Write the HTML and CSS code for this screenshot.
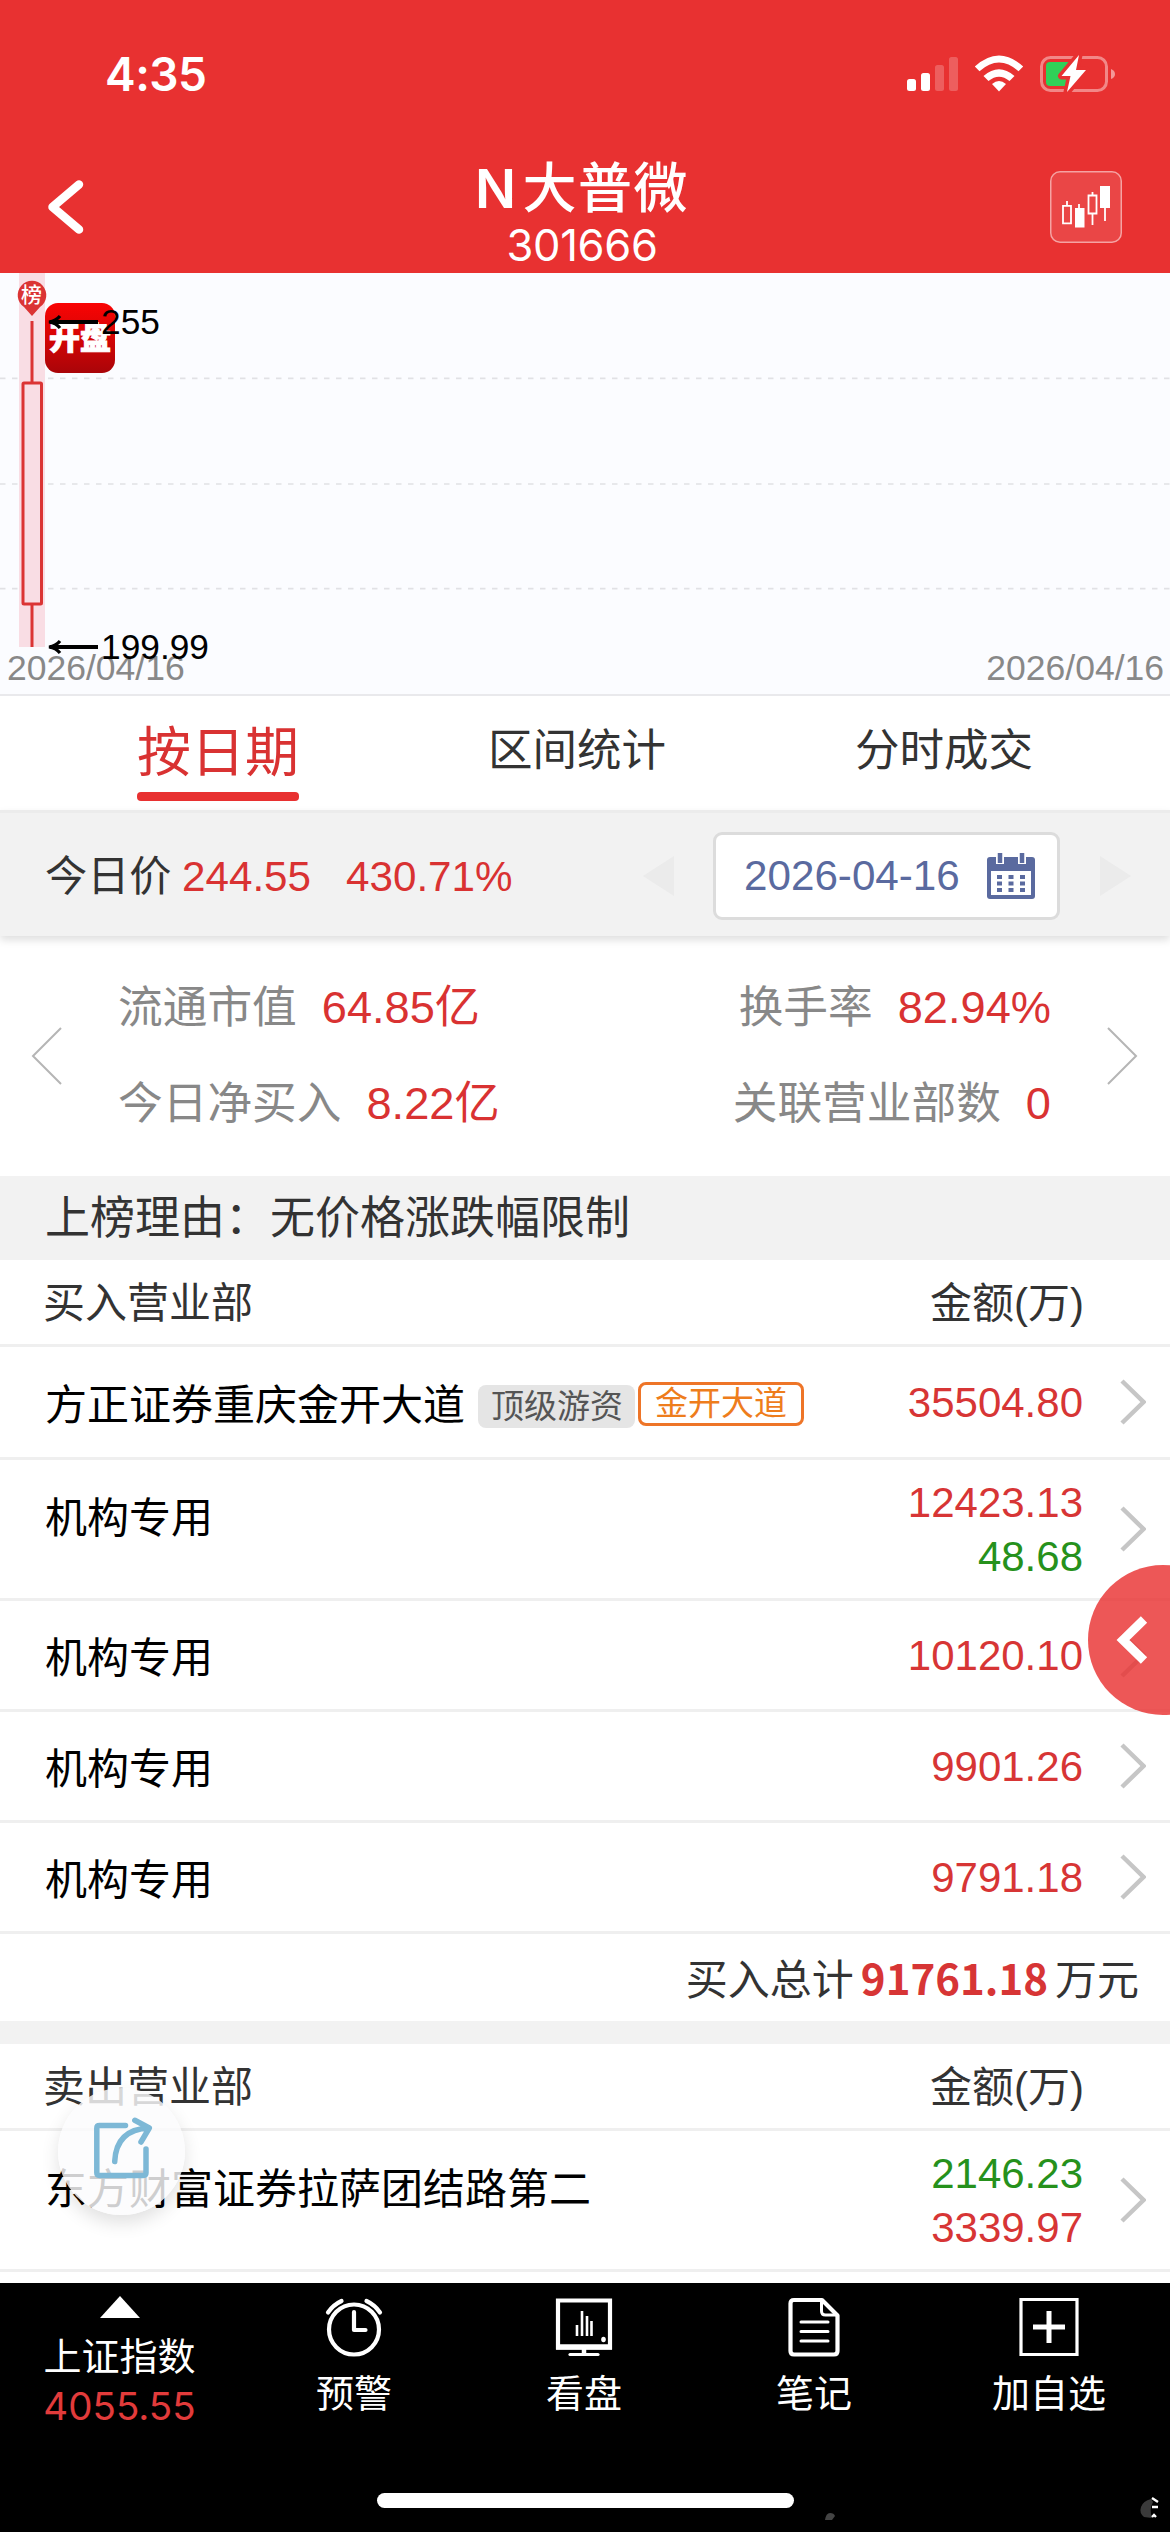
FILE: index.html
```html
<!DOCTYPE html>
<html lang="zh-CN">
<head>
<meta charset="utf-8">
<title>N大普微 301666</title>
<link rel="stylesheet" href="styles.css">
</head>
<body>
<div class="app">
  <header class="header">
    <div class="status">
      <span class="clock">4:35</span>
      <svg class="status-icons" width="210" height="40" viewBox="906 54 210 40">
        <g fill="#fff">
          <rect x="907" y="79" width="9" height="12" rx="2.5"/>
          <rect x="921" y="73" width="9" height="18" rx="2.5"/>
          <g opacity=".22"><rect x="935" y="65" width="9" height="26" rx="2.5"/><rect x="949" y="57" width="9" height="34" rx="2.5"/></g>
          <path d="M999 91.500l-7-7.500q7-6 14 0z"/>
          <path d="M983.500 76q15.500-13.500 31 0l-5 5q-10.500-8.500-21 0z"/>
          <path d="M974.800 66.500q24.200-22 48.400 0l-4.700 4.800q-19.500-17.500-39 0z"/>
          <path d="M1111 69q4 1.500 4 5t-4 5z" opacity=".5"/>
        </g>
        <rect x="1041.500" y="57.500" width="65" height="33" rx="9" fill="none" stroke="#fff" stroke-opacity=".42" stroke-width="3"/>
        <rect x="1046" y="62" width="25" height="24" rx="4" fill="#30d158"/>
        <path d="M1079 55l-17.500 21h9l-3.500 16 19-22h-10z" fill="#fff" stroke="#e83131" stroke-width="7" stroke-linejoin="round" paint-order="stroke"/>
      </svg>
    </div>
    <div class="navbar">
      <svg class="back" width="44" height="64" viewBox="45 176 44 64"><path d="M80 184.500L53.500 207 80 229.500" fill="none" stroke="#fff" stroke-width="8.500" stroke-linecap="round" stroke-linejoin="round"/></svg>
      <div class="heading">
        <h1 class="stock-name"><b>N</b>大普微</h1>
        <p class="stock-code">301666</p>
      </div>
      <div class="kline-btn">
        <svg width="72" height="72" viewBox="1050 171 72 72" fill="none" stroke="#fff" stroke-width="1.800">
          <path d="M1063 205.800h8v17.500h-8zM1067 205v-4M1088.500 195.500h8v18h-8zM1092.500 195v-3M1092.500 214v11M1079 208v-4M1105 207v14"/>
          <path d="M1075 208h9.500v19.500h-9.500zM1100 186h10v22h-10z" fill="#fff" stroke="none"/>
        </svg>
      </div>
    </div>
  </header>

  <section class="chart">
    <svg width="1170" height="421" viewBox="0 273 1170 421">
      <g stroke="#e1e1e5" stroke-width="1.700" stroke-dasharray="5.500 6.500"><path d="M0 378.300h1170M0 484h1170M0 588.700h1170"/></g>
      <rect x="19" y="273" width="26" height="374" fill="#f9dde4"/>
      <g stroke="#db3434" fill="none"><path d="M32 321v61M32 604v43" stroke-width="3"/><rect x="23" y="383" width="18.500" height="221" rx="1" stroke-width="3"/></g>
      <path d="M32 316l-8-9a14.300 14.300 0 1 1 16 0z" fill="#db3434"/>
    </svg>
    <span class="pin-text">榜</span>
    <span class="open-badge">开盘</span>
    <span class="axis-date axis-left">2026/04/16</span>
    <span class="axis-date axis-right">2026/04/16</span>
    <span class="mark mark-high"><svg width="52" height="18" viewBox="0 0 52 18"><path d="M3 9h48" fill="none" stroke="#000" stroke-width="4"/><path d="M13 3Q9 8 2 9q7 1 11 6" fill="none" stroke="#000" stroke-width="3.200"/></svg>255</span>
    <span class="mark mark-low"><svg width="52" height="18" viewBox="0 0 52 18"><path d="M3 9h48" fill="none" stroke="#000" stroke-width="4"/><path d="M13 3Q9 8 2 9q7 1 11 6" fill="none" stroke="#000" stroke-width="3.200"/></svg>199.99</span>
  </section>

  <nav class="tabs">
    <span class="tab active">按日期</span>
    <span class="tab">区间统计</span>
    <span class="tab">分时成交</span>
  </nav>

  <section class="price-bar">
    <span class="price-label">今日价</span>
    <span class="price">244.55</span>
    <span class="change">430.71%</span>
    <svg class="tri tri-prev" width="31" height="40"><path d="M0 20L31 0v40z" fill="#ebebeb"/></svg>
    <div class="date-box">
      <span>2026-04-16</span>
      <svg width="48" height="46" viewBox="987 853 48 46">
        <path d="M990 857h42q3 0 3 3v36q0 3-3 3h-42q-3 0-3-3v-36q0-3 3-3z" fill="#5a6a9f"/>
        <path d="M991 871h40v24h-40z" fill="#fff"/>
        <path d="M1000 851v13M1022 851v13" stroke="#fff" stroke-width="8"/>
        <path d="M1000 853v10M1022 853v10" stroke="#5a6a9f" stroke-width="4.500"/>
        <path d="M997 877h29M997 883.500h29M997 890h29" stroke="#5a6a9f" stroke-width="3.800" stroke-dasharray="5 6.500"/>
      </svg>
    </div>
    <svg class="tri tri-next" width="31" height="40"><path d="M31 20L0 0v40z" fill="#ebebeb"/></svg>
  </section>

  <section class="stats">
    <svg width="31" height="58"><path d="M30 1L2 29l28 28" fill="none" stroke="#b5b5b5" stroke-width="2"/></svg>
    <div class="stat-grid">
      <p>流通市值<b>64.85亿</b></p>
      <p>换手率<b>82.94%</b></p>
      <p>今日净买入<b>8.22亿</b></p>
      <p>关联营业部数<b>0</b></p>
    </div>
    <svg width="31" height="58"><path d="M1 1l28 28L1 57" fill="none" stroke="#b5b5b5" stroke-width="2"/></svg>
  </section>

  <div class="reason">上榜理由：无价格涨跌幅限制</div>

  <section class="table">
    <div class="thead"><span>买入营业部</span><span>金额(万)</span></div>
    <div class="row"><span class="name">方正证券重庆金开大道</span><span class="tag tag-gray">顶级游资</span><span class="tag tag-orange">金开大道</span>
      <span class="vals"><i class="up">35504.80</i></span><svg class="chev" width="26" height="46"><path d="M2 2l21.500 21L2 44"/></svg></div>
    <div class="row double"><span class="name">机构专用</span>
      <span class="vals"><i class="up">12423.13</i><i class="down">48.68</i></span><svg class="chev" width="26" height="46"><path d="M2 2l21.500 21L2 44"/></svg></div>
    <div class="row"><span class="name">机构专用</span>
      <span class="vals"><i class="up">10120.10</i></span><svg class="chev" width="26" height="46"><path d="M2 2l21.500 21L2 44"/></svg></div>
    <div class="row"><span class="name">机构专用</span>
      <span class="vals"><i class="up">9901.26</i></span><svg class="chev" width="26" height="46"><path d="M2 2l21.500 21L2 44"/></svg></div>
    <div class="row"><span class="name">机构专用</span>
      <span class="vals"><i class="up">9791.18</i></span><svg class="chev" width="26" height="46"><path d="M2 2l21.500 21L2 44"/></svg></div>
    <div class="total">买入总计<b>91761.18</b>万元</div>
  </section>

  <section class="table sell">
    <div class="thead"><span>卖出营业部</span><span>金额(万)</span></div>
    <div class="row double"><span class="name">东方财富证券拉萨团结路第二</span>
      <span class="vals"><i class="down">2146.23</i><i class="up">3339.97</i></span><svg class="chev" width="26" height="46"><path d="M2 2l21.500 21L2 44"/></svg></div>
  </section>

  <footer class="footer">
    <div class="index">
      <svg width="40" height="22"><path d="M20 0l20 22H0z" fill="#fff"/></svg>
      <span>上证指数</span>
      <span class="index-value">4055.55</span>
    </div>
    <div class="tool tool-alarm">
      <svg width="60" height="60" viewBox="325.500 2297 60 60" fill="none" stroke="#fff" stroke-width="4.200" stroke-linecap="round" stroke-linejoin="round"><circle cx="355.500" cy="2329.500" r="25"/><path d="M355.500 2312v18h11.500M329.500 2312.500q5-7.500 13.500-11.500M381.500 2312.500q-5-7.500-13.500-11.500"/></svg>
      <span>预警</span>
    </div>
    <div class="tool tool-watch">
      <svg width="60" height="60" viewBox="555 2297 60 60" fill="none" stroke="#fff"><path d="M559 2300.500h52v47h-52z" stroke-width="4.200"/><path d="M557 2347h56" stroke-width="5.500"/><path d="M585 2349v5" stroke-width="4.500"/><path d="M571 2354.500h28" stroke-width="3.200" stroke-linecap="round"/><path d="M578 2325v11M583 2311v25M588 2316v20M592.500 2321v15" stroke-width="2.600"/><ellipse cx="604.500" cy="2339.500" rx="2.300" ry="2.800" fill="#fff" stroke="none"/></svg>
      <span>看盘</span>
    </div>
    <div class="tool tool-note">
      <svg width="60" height="60" viewBox="784 2297 60 60" fill="none" stroke="#fff" stroke-linejoin="round"><path d="M794 2300h28l15.500 15.500v35.500q0 3.500-3.500 3.500h-40q-3.500 0-3.500-3.500v-47.500q0-3.500 3.500-3.500z" stroke-width="4.200"/><path d="M821.500 2300v11q0 4 4 4h12M801 2322h27M801 2331.500h27M801 2341h27" stroke-width="3" stroke-linecap="round"/></svg>
      <span>笔记</span>
    </div>
    <div class="tool tool-add">
      <svg width="60" height="60" viewBox="1020 2297 60 60" fill="none" stroke="#fff"><path d="M1022 2299.500h56v55h-56z" stroke-width="3.200"/><path d="M1050 2311v32M1034 2327h32" stroke-width="5"/></svg>
      <span>加自选</span>
    </div>
    <div class="home-bar"></div>
    <svg class="corner-mark" width="340" height="30" viewBox="820 2492 340 30">
      <path d="M825 2520q1-7 5-7t5 3l-3 4z" fill="#444"/>
      <path d="M1151 2499q-8 2-10 8t3 10l8 1q-3-9 1-16z" fill="#3a3a3a"/>
      <path d="M1152 2498l6 4M1152 2507h6M1152 2517l2-2 2 2" fill="none" stroke="#fff" stroke-width="2.400"/>
    </svg>
  </footer>

  <div class="side-float"><svg width="34" height="50" viewBox="1115 1615 34 50"><path d="M1144 1619.500L1123 1640l21 20.500" fill="none" stroke="#fff" stroke-width="9"/></svg></div>
  <div class="share-float">
    <svg width="60" height="64" viewBox="93 2116 60 64" fill="none" stroke="#7db8d6" stroke-width="5.500" stroke-linecap="round" stroke-linejoin="round"><path d="M125.500 2125.500H99.500q-2.700 0-2.700 2.700v44.600q0 2.700 2.700 2.700h43.800q2.700 0 2.700-2.700V2149"/><path d="M114.700 2161.500q1.500-32 34-33.500M134.800 2120.300l14.500 7.700-8.300 14"/></svg>
  </div>
</div>
</body>
</html>
```
FILE: styles.css
```css
* { box-sizing: border-box; }
body { margin: 0; background: #fff; font-family: "Liberation Sans", "Noto Sans CJK SC", sans-serif; color: #333; }
svg { display: block; flex: none; }
p, h1 { margin: 0; }
i { font-style: normal; }

.app { position: relative; width: 1170px; height: 2532px; overflow: hidden; display: flex; flex-direction: column; }
.app > * { flex: none; }

.header { height: 273px; background: #e83131; color: #fff; }
.status { height: 148px; padding: 0 54px 0 105px; display: flex; justify-content: space-between; align-items: center; }
.clock { font: 600 46px/46px Inter, sans-serif; letter-spacing: -0.5px; }
.navbar { height: 125px; padding: 0 48px 0 44px; display: flex; justify-content: space-between; }
.back { margin-top: 28px; }
.heading { text-align: center; padding-left: 26px; }
.stock-name { margin-top: 14px; font: 500 54px/54px Inter, "Noto Sans CJK SC", sans-serif; letter-spacing: 1.5px; white-space: nowrap; }
.stock-name b { font-weight: 600; margin-right: 5px; }
.stock-code { margin-top: 8px; font: 400 43.500px/43px Inter, sans-serif; letter-spacing: -0.3px; }
.kline-btn { width: 72px; height: 72px; margin-top: 23px; border-radius: 10px; background: rgba(255,255,255,.1); box-shadow: inset 0 0 0 1.5px rgba(255,255,255,.5); }

.chart { position: relative; height: 423px; background: #fbfcff; border-bottom: 2px solid #e9e9ec; }
.pin-text { position: absolute; left: 21px; top: 11px; font-size: 21px; line-height: 22px; font-weight: 500; color: #fff; }
.open-badge { position: absolute; left: 45px; top: 30px; width: 70px; height: 70px; border-radius: 13px; background: linear-gradient(#f90404, #d50505 50%, #a90509); color: #fff; font-size: 31px; line-height: 72px; font-weight: 900; -webkit-text-stroke: 1px #fff; text-align: center; }
.axis-date { position: absolute; top: 375px; font-size: 35.500px; line-height: 40px; color: #888; }
.axis-left { left: 7px; }
.axis-right { right: 6px; }
.mark { position: absolute; left: 47px; display: flex; align-items: center; gap: 2px; font-size: 35.300px; line-height: 40px; color: #000; }
.mark-high { top: 29px; }
.mark-low { top: 354px; }

.tabs { height: 114px; padding: 0 137px; display: flex; justify-content: space-between; }
.tab { font-size: 44.500px; line-height: 110px; height: 110px; }
.tab.active { height: 105px; font-size: 54px; line-height: 114px; color: #d93232; position: relative; }
.tab.active::after { content: ""; position: absolute; left: 0; right: 0; bottom: 0; height: 9px; border-radius: 4px; background: #e83131; }

.price-bar { height: 126px; border-top: 3px solid #ececec; background: #f2f2f2; box-shadow: 0 4px 8px rgba(0,0,0,.13); padding: 2px 39px 0 45px; display: flex; align-items: center; font-size: 42.200px; line-height: 60px; z-index: 1; }
.price-bar > span { padding-top: 2px; }
.price-label { width: 137px; }
.price { width: 164px; color: #d93232; }
.change { color: #d93232; }
.tri-prev { margin-left: auto; margin-right: 39px; }
.tri-next { margin-left: 40px; }
.date-box { width: 347px; height: 88px; padding: 0 22px 0 28px; display: flex; justify-content: space-between; align-items: center; border: 3px solid #dcdcdc; border-radius: 9px; background: #fff; color: #5a6a9f; }

.stats { height: 240px; padding: 0 32px 0 31px; display: flex; align-items: center; justify-content: space-between; color: #888; }
.stat-grid { width: 933px; display: grid; grid-template-columns: auto auto; justify-content: space-between; row-gap: 30px; font-size: 44.700px; line-height: 66px; }
.stat-grid p:nth-child(even) { text-align: right; }
.stat-grid b { font-weight: 400; font-size: 45.200px; color: #d93232; margin-left: 25px; }

.reason { height: 84px; padding-left: 45px; background: #f2f2f2; font-size: 45px; line-height: 86px; }

.thead { height: 87px; border-bottom: 3px solid #efefef; padding: 0 86px 0 43px; display: flex; justify-content: space-between; font-size: 42px; line-height: 88px; }
.row { height: 111px; border-bottom: 3px solid #efefef; padding: 0 24px 0 45px; display: flex; align-items: center; font-size: 42px; color: #000; }
.table .row:nth-child(2) { height: 113px; }
.table .row.double { height: 141px; }
.name { line-height: 60px; padding-top: 8px; }
.double .name { padding: 0 0 20px; }
.vals { margin-left: auto; padding-top: 2px; display: flex; flex-direction: column; align-items: flex-end; line-height: 54px; }
.up { color: #d73535; }
.down { color: #26911c; }
.chev { margin-left: 37px; fill: none; stroke: #c6c6c6; stroke-width: 4.500px; }
.tag { font-size: 33px; line-height: 43px; border-radius: 8px; white-space: nowrap; }
.tag-gray { margin: 9px 0 0 13px; padding: 0 12px 0 13px; background: #e5e5e5; color: #555; }
.tag-orange { margin: 4px 0 0 3px; padding: 0 14px; line-height: 38px; border: 3px solid #ee7528; color: #ee7d1c; }
.total { height: 87px; padding-right: 31px; text-align: right; font-size: 42px; line-height: 86px; }
.total b { margin: 0 7px; font: 700 42px/86px "Noto Sans CJK SC", sans-serif; color: #d73535; }
.sell { border-top: 23px solid #f2f2f2; }

.footer { position: absolute; left: 0; right: 0; top: 2283px; height: 249px; background: #000; color: #fff; display: flex; font-size: 38px; }
.index { width: 239px; display: flex; flex-direction: column; align-items: center; padding-top: 13px; line-height: 50px; font-size: 38px; }
.index > span { margin-top: 14px; }
.index .index-value { margin-top: -1px; font: 400 38.500px/50px Inter, sans-serif; color: #e23b3b; }
.tool { display: flex; flex-direction: column; align-items: center; padding-top: 14px; line-height: 50px; gap: 12px; width: 230px; }
.tool-add { margin-left: 5px; }
.home-bar { position: absolute; left: 377px; top: 210px; width: 417px; height: 15px; border-radius: 8px; background: #fff; }
.corner-mark { position: absolute; left: 820px; top: 209px; }

.side-float { position: absolute; left: 1088px; top: 1565px; width: 150px; height: 150px; border-radius: 50%; background: rgba(233,50,50,.82); padding: 50px 0 0 27px; }
.share-float { position: absolute; left: 58px; top: 2088px; width: 127px; height: 127px; border-radius: 50%; background: rgba(251,251,253,.82); box-shadow: 0 8px 18px rgba(0,0,0,.12); padding: 28px 0 0 35px; }
```
